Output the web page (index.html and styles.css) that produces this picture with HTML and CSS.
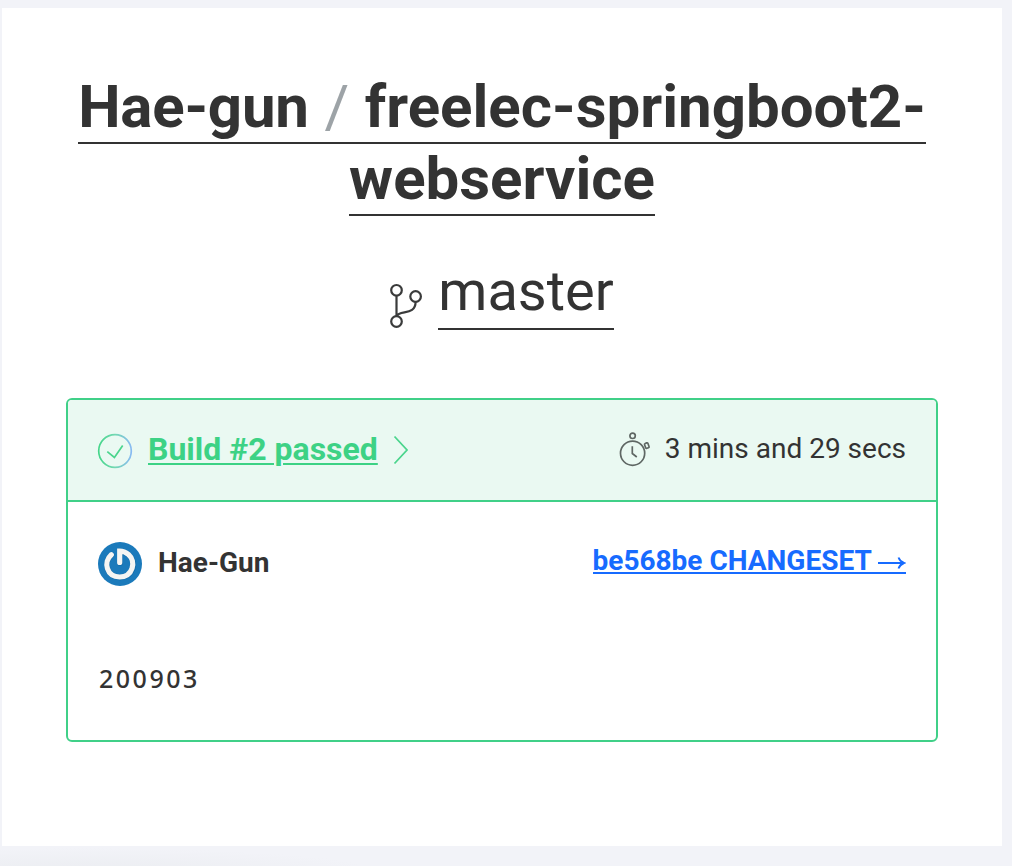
FILE: index.html
```html
<!DOCTYPE html>
<html lang="en">
<head>
<meta charset="utf-8">
<title>Build #2 passed</title>
<link rel="stylesheet" href="styles.css">
</head>
<body>
<main class="sheet">
  <h1 class="repo"><a class="repo-link"><span class="owner">Hae-gun</span> <span class="slash">/</span> freelec-springboot2-<br>webservice</a></h1>
  <div class="branch">
    <svg class="branch-icon" width="34" height="46" viewBox="0 0 34 46" fill="none" stroke="#3a3b3b" stroke-width="2.2">
      <circle cx="7.5" cy="7.3" r="5.3"/><circle cx="26.6" cy="13.5" r="5.3"/><circle cx="7.5" cy="38.5" r="5.3"/>
      <path d="M7.5 12.6V33.2M26.6 18.8C26.6 33 10.5 26.500 7.500 33.200"/>
    </svg>
    <a class="branch-link">master</a>
  </div>
  <section class="build">
    <header class="build-head">
      <svg class="check" width="36" height="36" viewBox="0 0 36 36" fill="none" stroke-width="1.7">
        <defs><linearGradient id="ring" x1="0" x2="1" y1="0" y2="0"><stop offset="0" stop-color="#45d68a"/><stop offset=".5" stop-color="#73d8b2"/><stop offset="1" stop-color="#88baf2"/></linearGradient></defs>
        <circle cx="18" cy="18" r="16.300" stroke="url(#ring)"/>
        <path d="M10.300 18.700L17.400 24.500L25.700 12.400" stroke="#4bd58d"/>
      </svg>
      <a class="build-link">Build #2 passed</a>
      <svg class="chevron" width="16" height="30" viewBox="0 0 16 30" fill="none" stroke="#4bd58d" stroke-width="1.800"><path d="M1.500 1.500L14 15L1.500 28.500"/></svg>
      <svg class="timer" width="32" height="36" viewBox="0 0 32 36" fill="none" stroke="#5f6764" stroke-width="1.700">
        <circle cx="13.600" cy="22.200" r="12.100"/><circle cx="13.600" cy="4.800" r="2.700"/>
        <path d="M13.300 15.300V22.500L17.800 26"/><rect x="26" y="12" width="3.600" height="5.200" rx="1" transform="rotate(-20 27.800 14.600)"/>
      </svg>
      <span class="duration">3 mins and 29 secs</span>
    </header>
    <div class="build-body">
      <div class="commit">
        <svg class="avatar" width="44" height="44" viewBox="0 0 44 44" fill="none" stroke-linecap="round">
          <circle cx="22" cy="22" r="22" fill="#1b7abb"/>
          <path d="M13.500 13C5 20 8.500 35 22 35.300C35.500 35 39 20 31 13C28 10.300 25.500 9.500 22 9.500V21" stroke="#125f96" stroke-width="6" opacity=".45"/>
          <path d="M13.300 12.700C5 20 8.500 34.700 21.700 35C35 34.700 38.500 19.500 30.500 12.500C27.500 10 25 9 21.700 9V20.500" stroke="#f5f5f3" stroke-width="5.200"/>
        </svg>
        <span class="author">Hae-Gun</span>
        <a class="changeset">be568be CHANGESET <svg class="arrow" width="28" height="14" viewBox="0 0 28 14" fill="none" stroke="currentColor" stroke-width="1.900"><path d="M0 7H26M20.500 1.500Q22 5.500 26 7Q22 8.500 20.500 12.500"/></svg></a>
      </div>
      <p class="message">200903</p>
    </div>
  </section>
</main>
</body>
</html>
```

FILE: styles.css
```css
* { box-sizing: border-box; }
body {
  margin: 0;
  height: 866px;
  padding: 8px 10px 20px 2px;
  overflow: hidden;
  background: radial-gradient(ellipse 300px 24px at 80px 872px, #ebedf1, transparent), #f2f3f8;
  color: #333;
  font-family: Roboto, sans-serif;
}
.sheet { height: 838px; padding: 63px 64px 0; background: #fff; }
.repo { margin: 0; font-size: 60px; line-height: 72px; font-weight: 700; text-align: center; white-space: nowrap; }
.repo-link { border-bottom: 2px solid #333; }
.owner { letter-spacing: -0.2px; }
.slash { margin: 0 0.7px; color: #9da3a7; font-weight: 400; }
.branch { display: flex; justify-content: center; margin-top: 41px; height: 74px; gap: 15px; padding-right: 1px; }
.branch-icon { margin-top: 27px; }
.branch-link { font-size: 56px; line-height: 70px; height: 74px; border-bottom: 2px solid #333; }
.build { margin-top: 68px; height: 344px; border: 2px solid #40d088; border-radius: 6px; overflow: hidden; }
.build-head { display: flex; align-items: center; height: 102px; padding: 0 30px 0 29px; background: #eaf9f2; border-bottom: 2px solid #40d088; }
.build-link { margin: 0 0 2px 15px; color: #3dd285; font-size: 32px; line-height: 40px; font-weight: 700; text-decoration: underline; text-decoration-thickness: 2px; text-underline-offset: 3px; }
.check { margin-top: 2px; }
.chevron { margin-left: 15px; }
.timer { margin: 0 0 2px auto; }
.duration { margin: 0 0 2px 14px; font-size: 28px; line-height: 36px; }
.build-body { padding: 40px 30px 0; }
.commit { display: flex; height: 44px; }
.author { margin-left: 16px; font-size: 28px; line-height: 42px; font-weight: 700; }
.changeset { margin-left: auto; height: 32px; color: #176bff; font-size: 28px; line-height: 38px; font-weight: 700; border-bottom: 2px solid #176bff; }
.arrow { vertical-align: 0; }
.message { margin: 74px 0 0 1px; font-family: "Noto Sans", sans-serif; font-size: 25px; line-height: 36px; letter-spacing: 2.5px; font-weight: 500; }
```
